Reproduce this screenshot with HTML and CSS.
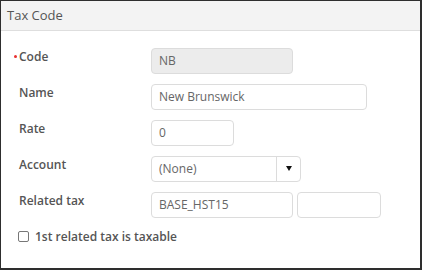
FILE: index.html
```html
<!DOCTYPE html>
<html lang="en">
<head>
    <meta charset="UTF-8">
    <title>Tax Code</title>
    <link rel="stylesheet" href="styles.css">
</head>
<body>

    <!-- Tax code panel -->
    <div class="panel">
        <div class="panel-head">Tax Code</div>

        <div class="panel-body">
            <div class="row">
                <label class="label required">Code</label>
                <div class="field readonly w-code">NB</div>
            </div>

            <div class="row">
                <label class="label">Name</label>
                <div class="field w-name">New Brunswick</div>
            </div>

            <div class="row">
                <label class="label">Rate</label>
                <div class="field w-rate">0</div>
            </div>

            <div class="row">
                <label class="label">Account</label>
                <div class="field select w-account">
                    <span class="select-text">(None)</span>
                    <span class="select-btn"><span class="arrow"></span></span>
                </div>
            </div>

            <div class="row">
                <label class="label">Related tax</label>
                <div class="field w-code">BASE_HST15</div>
                <div class="field w-tax2"></div>
            </div>

            <div class="check-row">
                <span class="checkbox"></span>
                <span class="check-label">1st related tax is taxable</span>
            </div>
        </div>
    </div>

</body>
</html>
```

FILE: styles.css
```css
/* Reset */
* {
    margin: 0;
    padding: 0;
    box-sizing: border-box;
}

body {
    font-family: 'Open Sans', sans-serif;
    color: #555;
    background: #fff;
}

/* Panel */
.panel {
    width: 422px;
    height: 270px;
    border-top: 1px solid #2e2e2e;
    border-left: 1px solid #2e2e2e;
    border-right: 2px solid #2e2e2e;
    border-bottom: 2px solid #2e2e2e;
}

.panel-head {
    height: 30px;
    line-height: 28px;
    padding-left: 6px;
    font-size: 13px;
    color: #555;
    background-color: #f3f3f3;
    border-bottom: 1px solid #dedede;
}

.panel-body {
    padding: 17px 0 0 17px;
}

/* Form rows */
.row {
    display: flex;
    gap: 4px;
    height: 26px;
    margin-bottom: 10px;
}

.label {
    position: relative;
    width: 129px;
    padding-top: 1px;
    padding-left: 1px;
    font-size: 12px;
    line-height: 16px;
    font-weight: 600;
    color: #555;
}

/* small red marker in front of required labels */
.label.required::before {
    content: "";
    position: absolute;
    left: -4px;
    top: 7px;
    width: 3px;
    height: 3px;
    border-radius: 50%;
    background: #e83030;
}

.field {
    height: 26px;
    line-height: 24px;
    padding: 0 7px;
    font-size: 12px;
    color: #666;
    background: #fff;
    border: 1px solid #dcdcdc;
    border-radius: 4px;
}

.field.readonly {
    background: #ececec;
}

.w-code { width: 142px; }
.w-name { width: 216px; }
.w-rate { width: 83px; }
.w-account { width: 150px; }
.w-tax2 { width: 84px; }

/* Select */
.select {
    display: flex;
    padding: 0;
}

.select-text {
    flex: 1;
    padding-left: 7px;
}

.select-btn {
    width: 24px;
    border-left: 1px solid #dcdcdc;
    display: flex;
    align-items: center;
    justify-content: center;
}

.arrow {
    width: 0;
    height: 0;
    border-left: 3px solid transparent;
    border-right: 3px solid transparent;
    border-top: 5px solid #111;
    margin-top: -2px;
}

/* Checkbox */
.check-row {
    display: flex;
    align-items: center;
    gap: 6px;
    margin-top: 3px;
}

.checkbox {
    width: 11px;
    height: 11px;
    border: 1px solid #777;
    border-radius: 2px;
    background: #fff;
}

.check-label {
    font-size: 12px;
    font-weight: 600;
    color: #555;
}
```
